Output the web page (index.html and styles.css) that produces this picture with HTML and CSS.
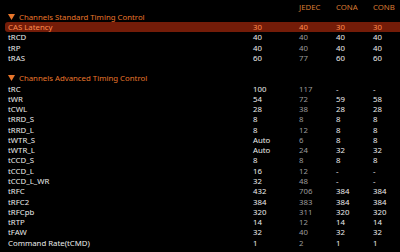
FILE: index.html
```html
<!DOCTYPE html>
<html>
<head>
<meta charset="utf-8">
<link rel="stylesheet" href="styles.css">
</head>
<body>
<div class="panel">
  <div class="row head">
    <span></span><span></span><span class="c-jedec">JEDEC</span><span>CONA</span><span>CONB</span>
  </div>
  <div class="title"><svg class="tri" width="7" height="6" viewBox="0 0 7 6"><polygon points="0,0 7,0 3.5,6" fill="#e8762b"/></svg>Channels Standard Timing Control</div>
  <div class="row sel"><span>CAS Latency</span><span>30</span><span>40</span><span>30</span><span>30</span></div>
  <div class="row"><span>tRCD</span><span>40</span><span class="j">40</span><span>40</span><span>40</span></div>
  <div class="row"><span>tRP</span><span>40</span><span class="j">40</span><span>40</span><span>40</span></div>
  <div class="row"><span>tRAS</span><span>60</span><span class="j">77</span><span>60</span><span>60</span></div>

  <div class="title second"><svg class="tri" width="7" height="6" viewBox="0 0 7 6"><polygon points="0,0 7,0 3.5,6" fill="#e8762b"/></svg>Channels Advanced Timing Control</div>
  <div class="row"><span>tRC</span><span>100</span><span class="j">117</span><span>-</span><span>-</span></div>
  <div class="row"><span>tWR</span><span>54</span><span class="j">72</span><span>59</span><span>58</span></div>
  <div class="row"><span>tCWL</span><span>28</span><span class="j">38</span><span>28</span><span>28</span></div>
  <div class="row"><span>tRRD_S</span><span>8</span><span class="j">8</span><span>8</span><span>8</span></div>
  <div class="row"><span>tRRD_L</span><span>8</span><span class="j">12</span><span>8</span><span>8</span></div>
  <div class="row"><span>tWTR_S</span><span>Auto</span><span class="j">6</span><span>8</span><span>8</span></div>
  <div class="row"><span>tWTR_L</span><span>Auto</span><span class="j">24</span><span>32</span><span>32</span></div>
  <div class="row"><span>tCCD_S</span><span>8</span><span class="j">8</span><span>8</span><span>8</span></div>
  <div class="row"><span>tCCD_L</span><span>16</span><span class="j">12</span><span>-</span><span>-</span></div>
  <div class="row"><span>tCCD_L_WR</span><span>32</span><span class="j">48</span><span>-</span><span>-</span></div>
  <div class="row"><span>tRFC</span><span>432</span><span class="j">706</span><span>384</span><span>384</span></div>
  <div class="row"><span>tRFC2</span><span>384</span><span class="j">383</span><span>384</span><span>384</span></div>
  <div class="row"><span>tRFCpb</span><span>320</span><span class="j">311</span><span>320</span><span>320</span></div>
  <div class="row"><span>tRTP</span><span>14</span><span class="j">12</span><span>14</span><span>14</span></div>
  <div class="row"><span>tFAW</span><span>32</span><span class="j">40</span><span>32</span><span>32</span></div>
  <div class="row"><span>Command Rate(tCMD)</span><span>1</span><span class="j">2</span><span>1</span><span>1</span></div>
</div>
</body>
</html>
```
FILE: styles.css
```css
html, body {
  margin: 0;
  padding: 0;
  background: #000;
  width: 400px;
  height: 252px;
  overflow: hidden;
}
.panel {
  padding-top: 1.5px;
  font-family: "Noto Sans", "DejaVu Sans", sans-serif;
  font-size: 7.8px;
  color: #ebebeb;
}
.row {
  display: grid;
  grid-template-columns: 245px 46px 37px 37px 1fr;
  height: 10.27px;
  line-height: 10.27px;
  padding-left: 8px;
  white-space: nowrap;
}
.head {
  color: #d97a33;
}
.j {
  color: #9c9c9c;
}
.title {
  height: 10.27px;
  line-height: 10.27px;
  padding-left: 8px;
  color: #e8762b;
  white-space: nowrap;
  display: flex;
  align-items: center;
}
.title.second {
  margin-top: 10.27px;
}
.tri {
  margin-right: 4px;
}
.sel {
  margin-left: 5px;
  padding-left: 3px;
  background: #741c08;
  border-radius: 3px 0 0 3px;
  color: #ff8c4e;
}
```
